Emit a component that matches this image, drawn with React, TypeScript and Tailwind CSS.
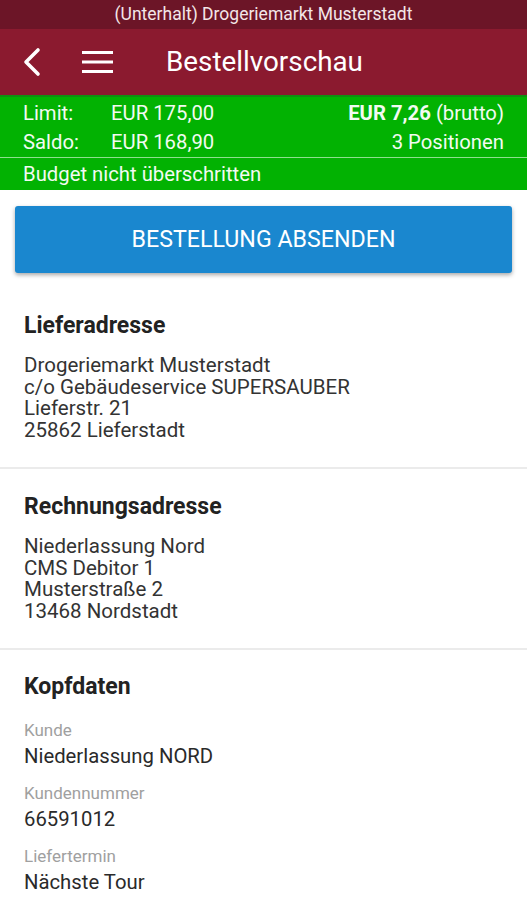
import React from 'react';

const font = { fontFamily: 'Roboto, "Noto Sans", sans-serif' };

const Section: React.FC<{ title: string; children: React.ReactNode }> = ({ title, children }) => (
  <div className="px-6 pt-6 pb-[25px] border-b-2 border-[#ebebeb]">
    <h2 className="text-[23px] leading-[28px] font-bold text-[#222]">{title}</h2>
    <div className="mt-[15px]">{children}</div>
  </div>
);

const Field: React.FC<{ label: string; value: string }> = ({ label, value }) => (
  <div className="mb-4">
    <div className="text-[17px] leading-[20px] text-[#a0a0a0]">{label}</div>
    <div className="mt-[5px] text-[20.3px] leading-[22px] text-[#2a2a2a]">{value}</div>
  </div>
);

export default function App() {
  return (
    <div className="w-[527px] h-[900px] overflow-hidden bg-white" style={font}>
      {/* status bar */}
      <div className="h-[29px] bg-[#6c1527] flex items-center justify-center text-[17.5px] text-[#f3e6e8]">
        (Unterhalt) Drogeriemarkt Musterstadt
      </div>

      {/* toolbar */}
      <div className="h-[66px] bg-[#8b1a2f] flex items-center text-white">
        <svg className="ml-[20px]" width="26" height="32" viewBox="0 0 26 32" fill="none">
          <path d="M18 4 L6 16 L18 28" stroke="white" strokeWidth="3.6" strokeLinecap="round" strokeLinejoin="round" />
        </svg>
        <svg className="ml-[36px]" width="32" height="24" viewBox="0 0 32 24">
          <rect x="0" y="1" width="31" height="3" fill="white" />
          <rect x="0" y="10.5" width="31" height="3" fill="white" />
          <rect x="0" y="20" width="31" height="3" fill="white" />
        </svg>
        <h1 className="ml-[52px] text-[27.8px] leading-none">Bestellvorschau</h1>
      </div>

      {/* budget bar */}
      <div className="bg-[#02b202] text-[#f2fbf2] text-[20.3px] border-t-2 border-[#109010]">
        <div className="px-[23px] pt-[1px]">
          <div className="h-[30px] flex items-center">
            <span className="w-[88px]">Limit:</span>
            <span>EUR 175,00</span>
            <span className="ml-auto"><span className="font-bold">EUR 7,26</span> (brutto)</span>
          </div>
          <div className="h-[29px] flex items-center">
            <span className="w-[88px]">Saldo:</span>
            <span>EUR 168,90</span>
            <span className="ml-auto">3 Positionen</span>
          </div>
        </div>
        <div className="h-[1px] bg-[#8ee08e]" />
        <div className="h-[32px] px-[23px] flex items-center">Budget nicht überschritten</div>
      </div>

      {/* submit button */}
      <div className="px-[15px] pt-4 pb-[15px]">
        <button className="w-full h-[67px] rounded-[3px] bg-[#1a87cf] text-white text-[23.2px] shadow-[0_2px_4px_rgba(0,0,0,0.35)]">
          BESTELLUNG ABSENDEN
        </button>
      </div>

      <Section title="Lieferadresse">
        <div className="text-[20.5px] leading-[21.7px] text-[#333]">
          <div>Drogeriemarkt Musterstadt</div>
          <div>c/o Gebäudeservice SUPERSAUBER</div>
          <div>Lieferstr. 21</div>
          <div>25862 Lieferstadt</div>
        </div>
      </Section>

      <Section title="Rechnungsadresse">
        <div className="text-[20.5px] leading-[21.7px] text-[#333]">
          <div>Niederlassung Nord</div>
          <div>CMS Debitor 1</div>
          <div>Musterstraße 2</div>
          <div>13468 Nordstadt</div>
        </div>
      </Section>

      <div className="px-6 pt-[23px]">
        <h2 className="text-[23px] leading-[28px] font-bold text-[#222]">Kopfdaten</h2>
        <div className="mt-[19px]">
          <Field label="Kunde" value="Niederlassung NORD" />
          <Field label="Kundennummer" value="66591012" />
          <Field label="Liefertermin" value="Nächste Tour" />
        </div>
      </div>
    </div>
  );
}
